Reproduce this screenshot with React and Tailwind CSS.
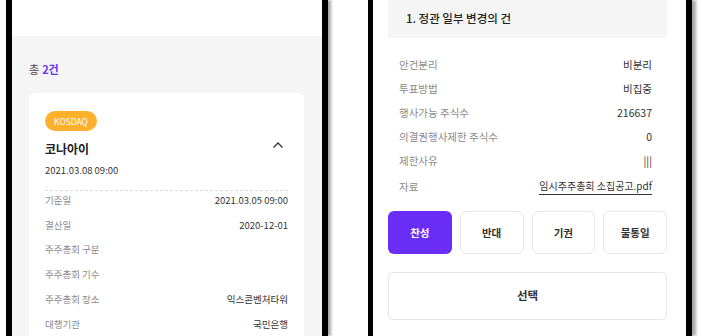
import React from "react";

const font = { fontFamily: '"Noto Sans CJK KR", "Noto Sans", sans-serif' };

function Row({ label, value }) {
  return (
    <div className="flex h-[24.7px] items-center justify-between">
      <span className="text-[9.5px] text-[#8a8a8a]">{label}</span>
      <span className="text-[9.5px] text-[#333]">{value}</span>
    </div>
  );
}

function Row2({ label, value, link }) {
  return (
    <div className="flex h-[24px] items-center justify-between">
      <span className="text-[10.5px] text-[#8a8a8a]">{label}</span>
      {link ? (
        <span className="border-b border-[#333] pb-[1px] text-[10px] leading-[14px] text-[#333]">{value}</span>
      ) : (
        <span className="text-[10.5px] text-[#333]">{value}</span>
      )}
    </div>
  );
}

export default function App() {
  return (
    <div className="flex h-[336px] w-[702px] overflow-hidden bg-white" style={font}>
      <div className="ml-[6px] h-full w-[322px] shrink-0 border-x-[6px] border-black shadow-[3px_0_3px_rgba(0,0,0,0.35)]">
        <div className="flex h-full flex-col">
          <div className="h-[42px] bg-white" />
          <div className="flex-1 bg-[#f5f5f5] pl-[17px] pr-[18px]">
            <div className="mt-[24px] flex h-[18px] items-center text-[11px] font-medium">
              <span className="text-[#666]">총</span>
              <span className="ml-[3px] font-bold text-[#6b36f5]">2건</span>
            </div>
            <div className="mt-[15px] rounded-t-[6px] bg-white px-[16px] pt-[18px]">
              <div className="flex h-[20px] w-[52px] items-center justify-center rounded-full bg-[#fcb02c] text-[8.5px] text-white">
                KOSDAQ
              </div>
              <div className="mt-[7px] flex h-[22px] items-center justify-between">
                <span className="text-[12px] font-bold text-[#222]">코나아이</span>
                <svg width="12" height="8" viewBox="0 0 12 8" className="mr-[4px] -mt-[8px]">
                  <path d="M1.5 6.5 L6 2 L10.5 6.5" fill="none" stroke="#333" strokeWidth="1.4" />
                </svg>
              </div>
              <div className="flex h-[20px] items-center text-[9.5px] text-[#333]">2021.03.08 09:00</div>
              <div className="mt-[10px] border-t border-dashed border-[#dcdcdc]" />
              <div className="-mt-[3px]">
                <Row label="기준일" value="2021.03.05 09:00" />
                <Row label="결산일" value="2020-12-01" />
                <Row label="주주총회 구분" value="" />
                <Row label="주주총회 기수" value="" />
                <Row label="주주총회 장소" value="익스콘벤처타워" />
                <Row label="대행기관" value="국민은행" />
              </div>
            </div>
          </div>
        </div>
      </div>
      <div className="ml-[40px] h-full w-[324px] shrink-0 border-l-[5px] border-r-[6px] border-black shadow-[4px_0_3px_rgba(0,0,0,0.35)]">
        <div className="h-full bg-white pl-[15px] pr-[19px]">
          <div className="flex h-[38px] items-center bg-[#f5f5f5] pl-[18px] text-[11.5px] font-medium text-[#222]">
            1. 정관 일부 변경의 건
          </div>
          <div className="mt-[15px] pl-[11px] pr-[15px]">
            <Row2 label="안건분리" value="비분리" />
            <Row2 label="투표방법" value="비집중" />
            <Row2 label="행사가능 주식수" value="216637" />
            <Row2 label="의결권행사제한 주식수" value="0" />
            <Row2 label="제한사유" value="|||" />
            <div className="mt-[2px]">
              <Row2 label="자료" value="임시주주총회 소집공고.pdf" link />
            </div>
          </div>
          <div className="mt-[12px] grid grid-cols-4 gap-[8px]">
            <div className="flex h-[43px] items-center justify-center rounded-[6px] bg-[#6a2df5] text-[10.5px] font-bold text-white">찬성</div>
            <div className="flex h-[43px] items-center justify-center rounded-[6px] border border-[#e6e6e6] text-[10.5px] font-bold text-[#333]">반대</div>
            <div className="flex h-[43px] items-center justify-center rounded-[6px] border border-[#e6e6e6] text-[10.5px] font-bold text-[#333]">기권</div>
            <div className="flex h-[43px] items-center justify-center rounded-[6px] border border-[#e6e6e6] text-[10.5px] font-bold text-[#333]">불통일</div>
          </div>
          <div className="mt-[18px] flex h-[48px] items-center justify-center rounded-[6px] border border-[#e6e6e6] text-[11.5px] font-bold text-[#333]">
            선택
          </div>
        </div>
      </div>
    </div>
  );
}
